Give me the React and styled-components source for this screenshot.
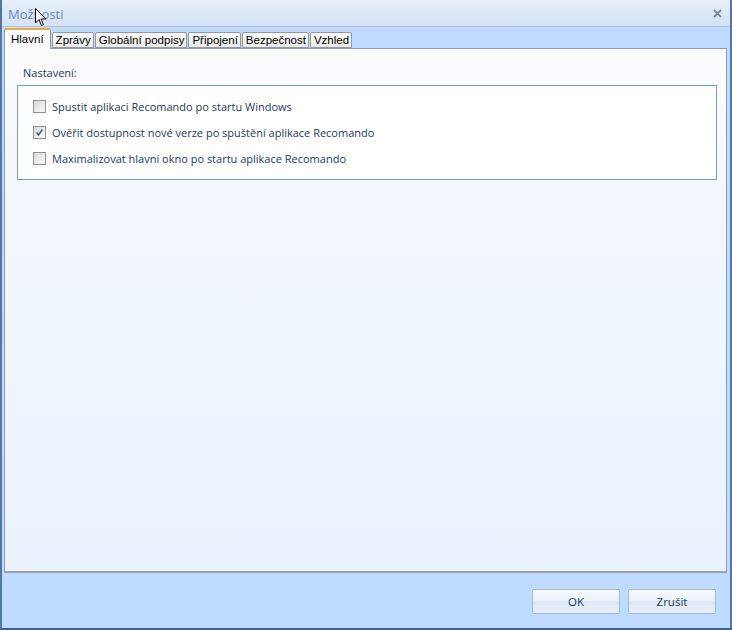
import React from "react"
import styled, { createGlobalStyle } from "styled-components"

//Styles
const GlobalStyle = createGlobalStyle`
  html, body {
    margin: 0;
    padding: 0;
    background: #bfdbff;
  }
  body {
    font-family: "Open Sans", "Liberation Sans", sans-serif;
  }
`
const Window = styled.div`
  position: relative;
  width: 732px;
  height: 630px;
  box-sizing: border-box;
  display: flex;
  flex-flow: column;
  background: #bfdbff;
  border-left: 2px solid #5476a4;
  border-right: 2px solid #5476a4;
  border-bottom: 2px solid #3f5f8c;
  overflow: hidden;
`
const TitleBar = styled.div`
  height: 26px;
  flex: none;
  display: flex;
  align-items: center;
  justify-content: space-between;
  padding: 0 8px 0 6px;
  background: linear-gradient(#e6eef9, #dbe7f6 60%, #d4e2f4);
  border-bottom: 1px solid #b0c4dc;
`
const Title = styled.span`
  font-size: 13px;
  color: #6287c0;
  padding-top: 2px;
`
const CloseIcon = styled.svg`
  width: 9px;
  height: 9px;
`
const Body = styled.div`
  flex: 1;
  display: flex;
  flex-flow: column;
  padding: 1px 3px 0 2px;
  min-height: 0;
`
const TabRow = styled.div`
  display: flex;
  align-items: flex-end;
  height: 20px;
  position: relative;
  z-index: 1;
`
const Tab = styled.div`
  box-sizing: border-box;
  height: 16px;
  padding: 0 2px 0 3px;
  margin-right: 1px;
  display: flex;
  align-items: center;
  font-family: "Liberation Sans", Arial, sans-serif;
  font-size: 11.5px;
  color: #000;
  border: 1px solid #919b9c;
  border-radius: 2px 2px 0 0;
  background: linear-gradient(#fdfdfd, #f1f1ef 70%, #e9e9e6);
  ${props =>
    props.active &&
    `border: 1px solid #919b9c;
     border-top: 2px solid #f2a93a;
     border-bottom: none;
     background: #fcfdfe;
     margin-bottom: -1px;
     height: 21px;
     padding: 0 6px 1px;`}
`
const Panel = styled.div`
  flex: 1;
  box-sizing: border-box;
  border: 1px solid #8f9aab;
  border-bottom: 2px solid #9aa3ad;
  background: linear-gradient(#fbfcfe, #f2f7fd 30%, #eaf2fd);
  padding: 14px 9px 0 12px;
`
const SectionLabel = styled.div`
  font-size: 11px;
  color: #1e395b;
  padding-left: 6px;
  height: 22px;
  line-height: 20px;
`
const GroupBox = styled.div`
  border: 1px solid #7b9ebd;
  background: #fff;
  padding: 7px 0 8px 15px;
  display: flex;
  flex-flow: column;
`
const CheckRow = styled.label`
  display: flex;
  align-items: center;
  height: 26px;
  gap: 5px;
  font-size: 11px;
  color: #1e395b;
`
const Box = styled.span`
  width: 11px;
  height: 11px;
  flex: none;
  border: 1px solid #8e8f8f;
  background: linear-gradient(135deg, #d8d8d8, #f4f4f4 80%);
  display: flex;
  align-items: center;
  justify-content: center;
  margin-right: 1px;
`
const Footer = styled.div`
  height: 55px;
  flex: none;
  display: flex;
  justify-content: flex-end;
  align-items: flex-start;
  gap: 8px;
  padding: 16px 11px 0 0;
  box-sizing: border-box;
`
const Button = styled.button`
  width: 88px;
  height: 25px;
  font-family: inherit;
  font-size: 11.5px;
  color: #1e395b;
  border: 1px solid #a9bbd3;
  border-radius: 2px;
  background: linear-gradient(#f7faff, #ecf2fa 45%, #dfe8f4 50%, #e9f0f9);
  padding: 0;
`
const Cursor = styled.svg`
  position: absolute;
  left: 33px;
  top: 8px;
  width: 12px;
  height: 19px;
`

const options = [
  { text: "Spustit aplikaci Recomando po startu Windows", checked: false },
  { text: "Ověřit dostupnost nové verze po spuštění aplikace Recomando", checked: true },
  { text: "Maximalizovat hlavní okno po startu aplikace Recomando", checked: false },
]
const tabs = ["Hlavní", "Zprávy", "Globální podpisy", "Připojení", "Bezpečnost", "Vzhled"]

const App = () => (
  <>
    <GlobalStyle />
    <Window>
      <TitleBar>
        <Title>Možnosti</Title>
        <CloseIcon viewBox="0 0 9 9">
          <path d="M1 1 L8 8 M8 1 L1 8" stroke="#7a8594" strokeWidth="1.8" />
        </CloseIcon>
      </TitleBar>
      <Body>
        <TabRow>
          {tabs.map((t, i) => (
            <Tab key={t} active={i === 0 ? 1 : 0}>
              {t}
            </Tab>
          ))}
        </TabRow>
        <Panel>
          <SectionLabel>Nastavení:</SectionLabel>
          <GroupBox>
            {options.map(o => (
              <CheckRow key={o.text}>
                <Box>
                  {o.checked && (
                    <svg width="9" height="9" viewBox="0 0 9 9">
                      <path d="M1.5 4.5 L3.5 7 L7.5 1.5" fill="none" stroke="#4a5d7a" strokeWidth="1.6" />
                    </svg>
                  )}
                </Box>
                {o.text}
              </CheckRow>
            ))}
          </GroupBox>
        </Panel>
        <Footer>
          <Button>OK</Button>
          <Button>Zrušit</Button>
        </Footer>
      </Body>
      <Cursor viewBox="0 0 12 19">
        <path d="M0.5 0.5 L0.5 15 L4 11.5 L6.5 17.5 L8.5 16.5 L6 11 L11 11 Z" fill="#fff" stroke="#000" strokeWidth="1" />
      </Cursor>
    </Window>
  </>
)

export default App
